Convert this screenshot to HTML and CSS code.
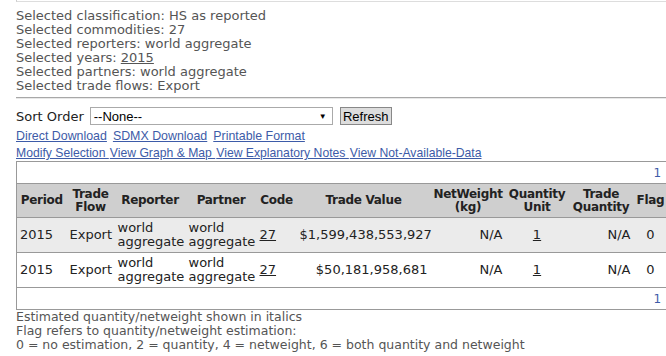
FILE: index.html
```html
<!DOCTYPE html>
<html lang="en">
<head>
  <meta charset="UTF-8">
  <title>Trade Data</title>
  <link rel="stylesheet" href="styles.css">
</head>
<body>

  <div class="top-edge"></div>

  <!-- Selection summary -->
  <div class="selection">
    Selected classification: HS as reported<br>
    Selected commodities: 27<br>
    Selected reporters: world aggregate<br>
    Selected years: <u>2015</u><br>
    Selected partners: world aggregate<br>
    Selected trade flows: Export
  </div>

  <hr class="divider">

  <div class="sort-row">
    <span>Sort Order</span>
    <div class="select">--None--<span class="arrow">&#9660;</span></div>
    <button class="refresh">Refresh</button>
  </div>

  <div class="links">
    <div><a href="#">Direct Download</a><a href="#">SDMX Download</a><a href="#">Printable Format</a></div>
    <div class="joined"><a href="#">Modify Selection&nbsp;</a><a href="#">View Graph &amp; Map&nbsp;</a><a href="#">View Explanatory Notes&nbsp;</a><a href="#">View Not-Available-Data</a></div>
  </div>

  <!-- Results -->
  <table class="results">
    <colgroup>
      <col style="width:50px">
      <col style="width:48px">
      <col style="width:71px">
      <col style="width:71px">
      <col style="width:40px">
      <col style="width:134px">
      <col style="width:75px">
      <col style="width:63px">
      <col style="width:65px">
      <col style="width:34px">
    </colgroup>
    <tr class="pager"><td colspan="10"><a href="#">1</a></td></tr>
    <tr class="head">
      <th>Period</th>
      <th>Trade Flow</th>
      <th>Reporter</th>
      <th>Partner</th>
      <th>Code</th>
      <th>Trade Value</th>
      <th>NetWeight (kg)</th>
      <th>Quantity Unit</th>
      <th>Trade Quantity</th>
      <th>Flag</th>
    </tr>
    <tr class="odd">
      <td>2015</td>
      <td>Export</td>
      <td class="wrap">world aggregate</td>
      <td class="wrap">world aggregate</td>
      <td><u>27</u></td>
      <td class="num">$1,599,438,553,927</td>
      <td class="num">N/A</td>
      <td class="mid"><u>1</u></td>
      <td class="num">N/A</td>
      <td class="mid">0</td>
    </tr>
    <tr>
      <td>2015</td>
      <td>Export</td>
      <td class="wrap">world aggregate</td>
      <td class="wrap">world aggregate</td>
      <td><u>27</u></td>
      <td class="num">$50,181,958,681</td>
      <td class="num">N/A</td>
      <td class="mid"><u>1</u></td>
      <td class="num">N/A</td>
      <td class="mid">0</td>
    </tr>
    <tr class="pager"><td colspan="10"><a href="#">1</a></td></tr>
  </table>

  <div class="notes">
    Estimated quantity/netweight shown in italics<br>
    Flag refers to quantity/netweight estimation:<br>
    0 = no estimation, 2 = quantity, 4 = netweight, 6 = both quantity and netweight
  </div>

</body>
</html>
```

FILE: styles.css
```css
html {
  overflow: hidden;
}

body {
  margin: 0 0 0 16px;
  font-family: "DejaVu Sans", Verdana, sans-serif;
  font-size: 13px;
  color: #555;
  background-color: #fff;
  width: 700px;
}

.top-edge {
  height: 1px;
  border-left: 1px solid #ccc;
  border-bottom: 1px solid #ddd;
}

.selection {
  padding-top: 7px;
  line-height: 14px;
}

.selection u {
  text-decoration-thickness: 1px;
}

.divider {
  margin: 4px 0 0 0;
  border: 0;
  border-top: 1px solid #a8a8a8;
  border-bottom: 1px solid #e8e8e8;
  height: 0;
}

.sort-row {
  display: flex;
  align-items: center;
  margin-top: 8px;
  height: 18px;
  color: #222;
}

.select {
  display: flex;
  justify-content: space-between;
  align-items: center;
  box-sizing: border-box;
  width: 243px;
  height: 18px;
  margin-left: 6px;
  padding: 0 5px 0 3px;
  border: 1px solid #aaa;
  font-family: "Liberation Sans", Arial, sans-serif;
  font-size: 13px;
  color: #000;
}

.arrow {
  font-size: 8px;
}

.refresh {
  box-sizing: border-box;
  width: 52px;
  height: 18px;
  margin-left: 7px;
  padding: 0;
  border: 1px solid #888;
  background-color: #ddd;
  font-family: "Liberation Sans", Arial, sans-serif;
  font-size: 13px;
  color: #000;
}

.links {
  padding-top: 3px;
  line-height: 17px;
  font-family: "Liberation Sans", Arial, sans-serif;
  font-size: 12.4px;
  white-space: nowrap;
}

.links a {
  color: #3d5ba8;
  margin-right: 6px;
}

.links .joined {
  font-size: 12.2px;
}

.links .joined a {
  margin-right: 1px;
}

.results {
  border-collapse: collapse;
  table-layout: fixed;
  width: 651px;
  margin-top: -1px;
  border: 1px solid #999;
  color: #222;
}

.results td,
.results th {
  padding: 0 3px;
  border-bottom: 1px solid #999;
}

.results th {
  height: 33px;
  font-size: 12px;
  line-height: 13px;
  letter-spacing: -0.3px;
  background-color: #cfcfcf;
  color: #222;
}

.results td {
  height: 34px;
  line-height: 14px;
  white-space: nowrap;
}

.results td.wrap {
  white-space: normal;
}

.results td.num {
  text-align: right;
}

.results td.mid {
  text-align: center;
}

.results tr.odd td {
  background-color: #ebebeb;
}

.results tr.pager td {
  height: 21px;
  text-align: right;
  font-size: 12px;
  padding-right: 6px;
}

.pager a {
  color: #3d5ba8;
  text-decoration: none;
}

.notes {
  line-height: 14px;
  font-size: 12.5px;
  color: #555;
}
```
